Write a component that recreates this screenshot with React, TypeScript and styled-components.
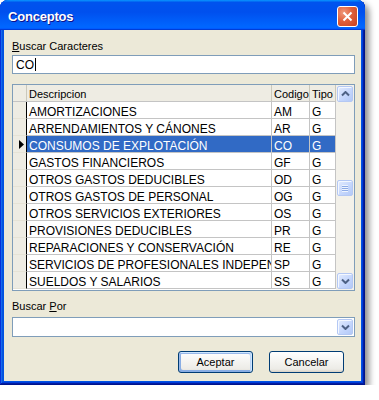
import { FC } from "react";
import styled, { createGlobalStyle } from "styled-components";

const ROWS = [
    { desc: "AMORTIZACIONES", code: "AM", type: "G" },
    { desc: "ARRENDAMIENTOS Y CÁNONES", code: "AR", type: "G" },
    { desc: "CONSUMOS DE EXPLOTACIÓN", code: "CO", type: "G", selected: true },
    { desc: "GASTOS FINANCIEROS", code: "GF", type: "G" },
    { desc: "OTROS GASTOS DEDUCIBLES", code: "OD", type: "G" },
    { desc: "OTROS GASTOS DE PERSONAL", code: "OG", type: "G" },
    { desc: "OTROS SERVICIOS EXTERIORES", code: "OS", type: "G" },
    { desc: "PROVISIONES DEDUCIBLES", code: "PR", type: "G" },
    { desc: "REPARACIONES Y CONSERVACIÓN", code: "RE", type: "G" },
    { desc: "SERVICIOS DE PROFESIONALES INDEPENDIENTES", code: "SP", type: "G" },
    { desc: "SUELDOS Y SALARIOS", code: "SS", type: "G" },
];

const GlobalStyle = createGlobalStyle`
    html, body {
        margin: 0;
        padding: 0;
        background: #fff;
    }
    body {
        font-family: "Liberation Sans", Arial, sans-serif;
        font-size: 11px;
        color: #000;
    }
`;

const Window = styled.div`
    width: 365px;
    height: 385px;
    box-sizing: border-box;
    display: flex;
    flex-direction: column;
    padding: 0 4px 4px;
    border-radius: 8px 8px 0 0;
    overflow: hidden;
    background: #0054e3;
    box-shadow:
        4px 4px 6px rgba(0, 0, 0, 0.45),
        inset -1px -1px #00138c,
        inset 1px 1px #0831d9,
        inset -2px -2px #001ea0,
        inset 2px 2px #166aee,
        inset -3px -3px #003bda,
        inset 3px 3px #0855dd;
`;

const TitleBar = styled.div`
    height: 30px;
    margin: 0 -4px;
    padding: 2px 7px 0 8px;
    box-sizing: border-box;
    display: flex;
    align-items: center;
    justify-content: space-between;
    background: linear-gradient(180deg, #0997ff, #0053ee 8%, #0050ee 40%, #0066ff 88%, #0066ff 93%, #005bff 95%, #003dd7 96%, #003dd7);
`;

const Title = styled.span`
    color: #fff;
    font-weight: bold;
    font-size: 13px;
    letter-spacing: -0.2px;
    text-shadow: 1px 1px #0f1089;
`;

const CloseButton = styled.span`
    width: 21px;
    height: 21px;
    box-sizing: border-box;
    border: 1px solid #fff;
    border-radius: 3px;
    display: flex;
    align-items: center;
    justify-content: center;
    background: radial-gradient(circle at 30% 30%, #f09a7d, #e0603c 45%, #c6401d);
`;

const Body = styled.div`
    flex: 1;
    display: flex;
    flex-direction: column;
    background: #ece9d8;
    padding: 10px 6px 8px 8px;
`;

const Label = styled.div<{ $gap?: number }>`
    height: 13px;
    line-height: 13px;
    margin-top: ${p => p.$gap ?? 0}px;
`;

const TextBox = styled.div`
    height: 19px;
    margin-top: 2px;
    box-sizing: border-box;
    border: 1px solid #7f9db9;
    background: #fff;
    display: flex;
    align-items: center;
    padding-left: 3px;
    font-size: 12px;
`;

const Caret = styled.span`
    width: 1px;
    height: 13px;
    margin-left: 1px;
    background: #000;
`;

const GridFrame = styled.div`
    height: 207px;
    margin-top: 10px;
    box-sizing: border-box;
    border: 1px solid #7f9db9;
    background: #fff;
    display: flex;
`;

const Table = styled.div`
    width: 323px;
    display: flex;
    flex-direction: column;
`;

const COLS = "14px 245px 38px 26px";

const HeaderRow = styled.div`
    display: grid;
    grid-template-columns: ${COLS};
    height: 17px;
    box-sizing: border-box;
    border-bottom: 1px solid #c4c4c4;
    background: #eeece3;
`;

const HeaderCell = styled.div`
    padding: 3px 0 0 2px;
    line-height: 13px;
    border-right: 1px solid #cac8bb;
    overflow: hidden;
    white-space: nowrap;
`;

const Row = styled.div<{ $selected?: boolean }>`
    display: grid;
    grid-template-columns: ${COLS};
    height: 17px;
    font-size: 12px;
    background: ${p => (p.$selected ? "#316ac5" : "#fff")};
    color: ${p => (p.$selected ? "#fff" : "#000")};
`;

const RowHead = styled.div`
    background: #eeece3;
    border-right: 1px solid #000;
    border-bottom: 1px solid #e6e3d6;
    display: flex;
    align-items: center;
    justify-content: flex-end;
    padding-right: 2px;
`;

const Cell = styled.div`
    padding: 4px 0 0 2px;
    line-height: 12px;
    border-right: 1px solid #c4c4c4;
    border-bottom: 1px solid #c4c4c4;
    overflow: hidden;
    white-space: nowrap;
`;

const ScrollBar = styled.div`
    flex: 1;
    display: flex;
    flex-direction: column;
    padding: 1px 1px 1px 1px;
    background: #f3f1ea;
`;

const Track = styled.div`
    flex: 1;
    display: flex;
    flex-direction: column;
`;

const ScrollButton = styled.div<{ $offset?: number }>`
    width: 16px;
    height: 16px;
    box-sizing: border-box;
    margin-top: ${p => p.$offset ?? 0}px;
    border: 1px solid #b4c8f4;
    border-radius: 2px;
    background: linear-gradient(135deg, #e2ebfe, #c3d5fc 60%, #b3c9f7);
    box-shadow: inset 1px 1px #f4f8ff;
    display: flex;
    align-items: center;
    justify-content: center;
`;

const Grip = styled.span`
    width: 6px;
    height: 7px;
    background: repeating-linear-gradient(180deg, #eef4fe 0 1px, #8caae6 1px 2px);
`;

const ComboBox = styled.div`
    height: 20px;
    margin-top: 4px;
    box-sizing: border-box;
    border: 1px solid #7f9db9;
    background: #fff;
    display: flex;
    justify-content: flex-end;
    padding: 1px;
`;

const ComboButton = styled(ScrollButton)`
    height: 16px;
`;

const Buttons = styled.div`
    margin-top: 14px;
    display: flex;
    justify-content: flex-end;
    gap: 16px;
    padding-right: 11px;
`;

const Button = styled.button<{ $default?: boolean }>`
    width: 75px;
    height: 22px;
    padding: 0;
    font-family: "Liberation Sans", Arial, sans-serif;
    font-size: 11px;
    color: #000;
    border: 1px solid #003c74;
    border-radius: 3px;
    background: linear-gradient(180deg, #fff, #ecebe6 86%, #d6d0c5);
    box-shadow: ${p =>
        p.$default
            ? "inset -1px 1px #cee7ff, inset 1px 2px #98b8ea, inset -2px 2px #bcd4f6, inset 1px -1px #89ade4, inset 2px -2px #89ade4"
            : "none"};
`;

const Chevron: FC<{ down?: boolean }> = ({ down }) => (
    <svg width="9" height="6" viewBox="0 0 9 6">
        <path
            d={down ? "M1 1.5 L4.5 5 L8 1.5" : "M1 4.5 L4.5 1 L8 4.5"}
            fill="none"
            stroke="#4d6185"
            strokeWidth="2"
        />
    </svg>
);

const Pointer = () => (
    <svg width="5" height="9" viewBox="0 0 5 9">
        <polygon points="0,0 5,4.5 0,9" fill="#000" />
    </svg>
);

const App: FC = () => {
    return (
        <>
            <GlobalStyle />
            <Window>
                <TitleBar>
                    <Title>Conceptos</Title>
                    <CloseButton>
                        <svg width="11" height="11" viewBox="0 0 11 11">
                            <path d="M1.5 1.5 L9.5 9.5 M9.5 1.5 L1.5 9.5" stroke="#fff" strokeWidth="2" />
                        </svg>
                    </CloseButton>
                </TitleBar>
                <Body>
                    <Label>
                        <u>B</u>uscar Caracteres
                    </Label>
                    <TextBox>
                        CO<Caret />
                    </TextBox>
                    <GridFrame>
                        <Table>
                            <HeaderRow>
                                <HeaderCell />
                                <HeaderCell>Descripcion</HeaderCell>
                                <HeaderCell>Codigo</HeaderCell>
                                <HeaderCell>Tipo</HeaderCell>
                            </HeaderRow>
                            {ROWS.map(r => (
                                <Row key={r.code} $selected={r.selected}>
                                    <RowHead>{r.selected && <Pointer />}</RowHead>
                                    <Cell>{r.desc}</Cell>
                                    <Cell>{r.code}</Cell>
                                    <Cell>{r.type}</Cell>
                                </Row>
                            ))}
                        </Table>
                        <ScrollBar>
                            <ScrollButton>
                                <Chevron />
                            </ScrollButton>
                            <Track>
                                <ScrollButton $offset={78}>
                                    <Grip />
                                </ScrollButton>
                            </Track>
                            <ScrollButton>
                                <Chevron down />
                            </ScrollButton>
                        </ScrollBar>
                    </GridFrame>
                    <Label $gap={9}>
                        Buscar <u>P</u>or
                    </Label>
                    <ComboBox>
                        <ComboButton>
                            <Chevron down />
                        </ComboButton>
                    </ComboBox>
                    <Buttons>
                        <Button $default>Aceptar</Button>
                        <Button>Cancelar</Button>
                    </Buttons>
                </Body>
            </Window>
        </>
    );
};

export default App;
